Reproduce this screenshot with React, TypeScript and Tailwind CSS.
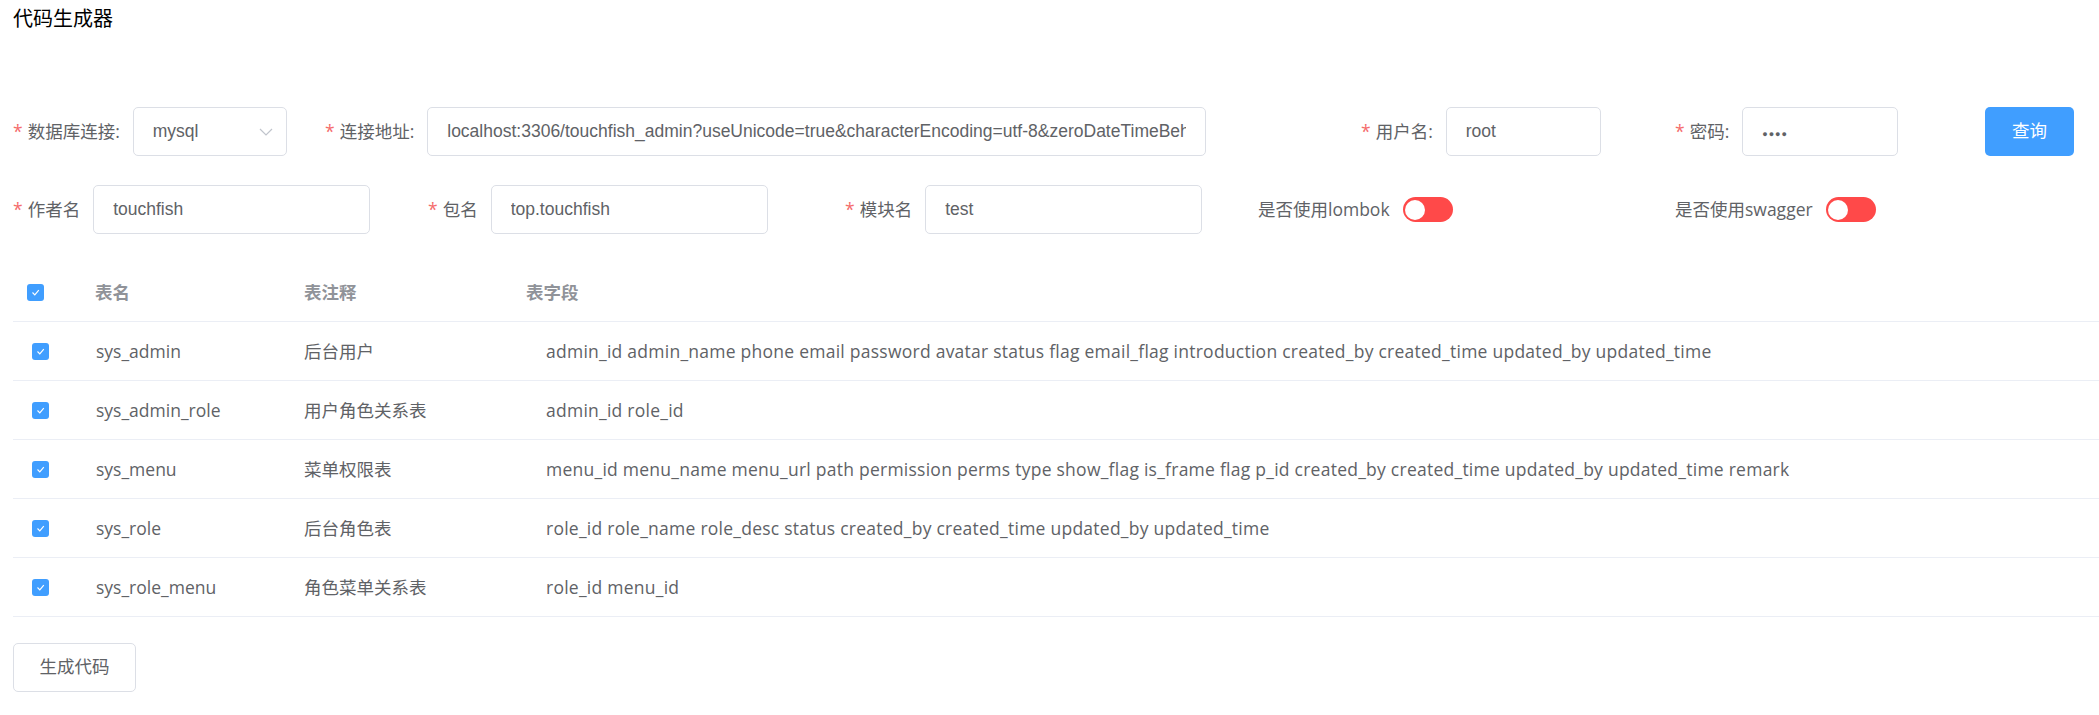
import React from "react";

type TRow = {
  name: string;
  comment: string;
  fields: string;
};

const rows: TRow[] = [
  {
    name: "sys_admin",
    comment: "后台用户",
    fields:
      "admin_id admin_name phone email password avatar status flag email_flag introduction created_by created_time updated_by updated_time",
  },
  { name: "sys_admin_role", comment: "用户角色关系表", fields: "admin_id role_id" },
  {
    name: "sys_menu",
    comment: "菜单权限表",
    fields:
      "menu_id menu_name menu_url path permission perms type show_flag is_frame flag p_id created_by created_time updated_by updated_time remark",
  },
  {
    name: "sys_role",
    comment: "后台角色表",
    fields: "role_id role_name role_desc status created_by created_time updated_by updated_time",
  },
  { name: "sys_role_menu", comment: "角色菜单关系表", fields: "role_id menu_id" },
];

const Label = ({ text, required = true }: { text: string; required?: boolean }) => (
  <div className="flex items-center whitespace-nowrap text-[17.5px] text-[#606266] mr-[13px] [font-family:'Open_Sans','Noto_Sans_CJK_SC',sans-serif]">
    {required && <span className="text-[#F56C6C] mr-[5px]">*</span>}
    {text}
  </div>
);

const TextBox = ({ value, width }: { value: React.ReactNode; width: string }) => (
  <div
    className={`${width} h-[49px] border border-[#DCDFE6] rounded-[5px] bg-white pl-[19px] pr-[19px] flex items-center text-[17.5px] text-[#606266]`}
  >
    <span className="block w-full overflow-hidden whitespace-nowrap">{value}</span>
  </div>
);

const Switch = () => (
  <div className="w-[50px] h-[25px] rounded-full bg-[#ff4949] relative shrink-0">
    <div className="absolute left-[2.5px] top-[2.5px] w-[20px] h-[20px] rounded-full bg-white" />
  </div>
);

const Checkbox = () => (
  <div className="w-[17px] h-[17px] rounded-[3px] bg-[#409EFF] flex items-center justify-center">
    <svg width="11" height="11" viewBox="0 0 11 11">
      <polyline points="2.5,5.5 4.8,7.8 8.8,3.2" fill="none" stroke="#fff" strokeWidth="1.2" />
    </svg>
  </div>
);

const App = () => {
  return (
    <div className="min-h-[715px] bg-white pt-[6px] pl-[13px] [font-family:'Liberation_Sans','Noto_Sans_CJK_SC',sans-serif]">
      {/* title */}
      <div className="text-[20px] leading-[26px] h-[26px] text-black">代码生成器</div>

      {/* row 1 */}
      <div className="flex items-center h-[49px] mt-[75px]">
        <div className="w-[312px] flex items-center">
          <Label text="数据库连接:" />
          <div className="w-[154px] h-[49px] border border-[#DCDFE6] rounded-[5px] pl-[19px] pr-[13px] flex items-center justify-between text-[17.5px] text-[#606266]">
            <span>mysql</span>
            <svg width="14" height="8" viewBox="0 0 14 8">
              <polyline points="1,1 7,7 13,1" fill="none" stroke="#C0C4CC" strokeWidth="1.2" />
            </svg>
          </div>
        </div>
        <div className="w-[1036px] flex items-center">
          <Label text="连接地址:" />
          <TextBox
            width="w-[779px]"
            value="localhost:3306/touchfish_admin?useUnicode=true&characterEncoding=utf-8&zeroDateTimeBehavior"
          />
        </div>
        <div className="w-[314px] flex items-center">
          <Label text="用户名:" />
          <TextBox width="w-[155px]" value="root" />
        </div>
        <div className="w-[310px] flex items-center">
          <Label text="密码:" />
          <TextBox
            width="w-[156px]"
            value={<span className="text-[9px] tracking-[1px]">●●●●</span>}
          />
        </div>
        <button className="w-[89px] h-[49px] rounded-[5px] bg-[#409EFF] text-white text-[17.5px]">
          查询
        </button>
      </div>

      {/* row 2 */}
      <div className="flex items-center h-[49px] mt-[29px]">
        <div className="w-[415px] flex items-center">
          <Label text="作者名" />
          <TextBox width="w-[277px]" value="touchfish" />
        </div>
        <div className="w-[417px] flex items-center">
          <Label text="包名" />
          <TextBox width="w-[277px]" value="top.touchfish" />
        </div>
        <div className="w-[413px] flex items-center">
          <Label text="模块名" />
          <TextBox width="w-[277px]" value="test" />
        </div>
        <div className="w-[417px] flex items-center">
          <Label text="是否使用lombok" required={false} />
          <Switch />
        </div>
        <div className="flex items-center">
          <Label text="是否使用swagger" required={false} />
          <Switch />
        </div>
      </div>

      {/* table */}
      <div className="mt-[29px] text-[17.5px] [font-family:'Open_Sans','Noto_Sans_CJK_SC',sans-serif]">
        <div className="flex items-center h-[59px] border-b border-[#EBEEF5] font-bold text-[#909399]">
          <div className="w-[82px] pl-[14px]">
            <Checkbox />
          </div>
          <div className="w-[209px]">表名</div>
          <div className="w-[222px]">表注释</div>
          <div>表字段</div>
        </div>
        {rows.map((row) => (
          <div
            key={row.name}
            className="flex items-center h-[59px] border-b border-[#EBEEF5] text-[#606266] whitespace-nowrap"
          >
            <div className="w-[83px] pl-[19px]">
              <Checkbox />
            </div>
            <div className="w-[208px]">{row.name}</div>
            <div className="w-[242px]">{row.comment}</div>
            <div className="tracking-[0.25px]">{row.fields}</div>
          </div>
        ))}
      </div>

      {/* generate */}
      <button className="mt-[26px] w-[123px] h-[49px] border border-[#DCDFE6] rounded-[5px] bg-white text-[17.5px] text-[#606266]">
        生成代码
      </button>
    </div>
  );
};

export default App;
